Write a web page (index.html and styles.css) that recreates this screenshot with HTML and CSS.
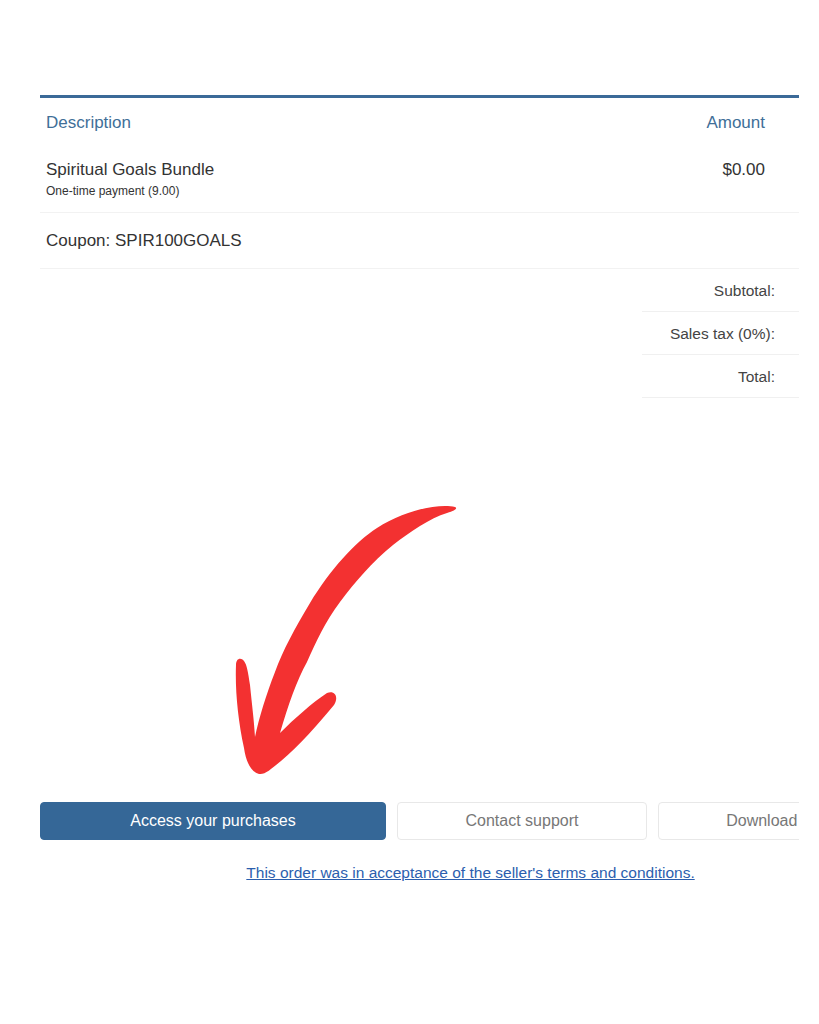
FILE: index.html
```html
<!DOCTYPE html>
<html lang="en">
<head>
    <meta charset="UTF-8">
    <meta name="viewport" content="width=device-width, initial-scale=1.0">
    <title>Order receipt</title>
    <link rel="stylesheet" href="styles.css">
</head>
<body>
    <div class="frame">
        <div class="receipt">
            <div class="items">
                <div class="row head">
                    <div>Description</div>
                    <div class="amount">Amount</div>
                </div>
                <div class="row item">
                    <div>
                        <div class="name">Spiritual Goals Bundle</div>
                        <div class="note">One-time payment (9.00)</div>
                    </div>
                    <div class="amount">$0.00</div>
                </div>
                <div class="row coupon">
                    <div>Coupon: SPIR100GOALS</div>
                    <div class="amount"></div>
                </div>
            </div>

            <div class="totals">
                <div class="total-row">
                    <div class="label">Subtotal:</div>
                    <div class="value"></div>
                </div>
                <div class="total-row">
                    <div class="label">Sales tax (0%):</div>
                    <div class="value"></div>
                </div>
                <div class="total-row">
                    <div class="label">Total:</div>
                    <div class="value"></div>
                </div>
            </div>

            <div class="actions">
                <button class="btn primary">Access your purchases</button>
                <button class="btn">Contact support</button>
                <button class="btn wide">Download receipt</button>
            </div>

            <p class="terms"><a href="#">This order was in acceptance of the seller's terms and conditions.</a></p>
        </div>
    </div>

    <!-- hand drawn arrow pointing at the first button -->
    <svg class="arrow" viewBox="220 490 250 300" width="250" height="300">
        <path fill="#f33131" d="M455 507
            C 440 503, 405 510, 377 528
            C 355 542, 330 570, 310 603
            C 295 628, 283 650, 275 672
            C 266 695, 259 718, 255 737
            C 254 720, 252 705, 250 685
            C 248 672, 247 665, 244 661
            C 241 657, 236 658, 236 665
            C 235 690, 238 720, 244 748
            C 246 762, 251 772, 259 774
            C 265 775, 271 769, 281 761
            C 299 746, 319 723, 334 705
            C 339 697, 335 690, 327 693
            C 312 703, 295 718, 280 733
            C 288 705, 297 680, 307 662
            C 316 642, 325 622, 340 602
            C 355 582, 372 562, 393 545
            C 410 532, 430 518, 447 513
            C 455 511, 458 508, 455 507 Z"/>
    </svg>
</body>
</html>
```

FILE: styles.css
```css
body {
    margin: 0;
    font-family: "Liberation Sans", Arial, sans-serif;
    color: #333;
    background: #fff;
}
.frame {
    margin-left: 40px;
    padding-top: 95px;
    width: 759px;
    overflow: hidden;
}
.receipt {
    width: 861px;
}
.items {
    width: 759px;
    border-top: 3px solid #3b6a98;
}
.row {
    display: flex;
    justify-content: space-between;
    padding: 0 34px 0 6px;
    font-size: 17px;
    line-height: 20px;
}
.row.head {
    padding-top: 15px;
    padding-bottom: 13px;
    color: #3f6f98;
}
.row.item {
    padding-top: 14px;
    padding-bottom: 13px;
    border-bottom: 1px solid #f2f2f2;
}
.note {
    margin-top: 3px;
    font-size: 12px;
    line-height: 16px;
}
.row.coupon {
    padding-top: 18px;
    padding-bottom: 17px;
    border-bottom: 1px solid #f2f2f2;
}
.amount {
    text-align: right;
}
.totals {
    margin-left: 602px;
    width: 259px;
}
.total-row {
    display: grid;
    grid-template-columns: 133px 1fr;
    border-bottom: 1px solid #f0f0f0;
    font-size: 15.5px;
    line-height: 19px;
    padding: 12px 0 11px;
    color: #444;
}
.total-row .label {
    text-align: right;
}
.actions {
    display: flex;
    gap: 11px;
    margin-top: 404px;
}
.btn {
    flex-shrink: 0;
    width: 250px;
    height: 38px;
    padding-bottom: 2px;
    border: 1px solid #e8e8e8;
    border-radius: 4px;
    background: #fff;
    color: #777;
    font-family: inherit;
    font-size: 16px;
    cursor: pointer;
}
.btn.wide {
    width: 260px;
}
.btn.primary {
    width: 346px;
    border-color: #356797;
    background: #356797;
    color: #fff;
}
.terms {
    margin: 24px 0 0;
    text-align: center;
    font-size: 15.5px;
}
.terms a {
    color: #2b5eae;
}
.arrow {
    position: absolute;
    left: 220px;
    top: 490px;
}
```
